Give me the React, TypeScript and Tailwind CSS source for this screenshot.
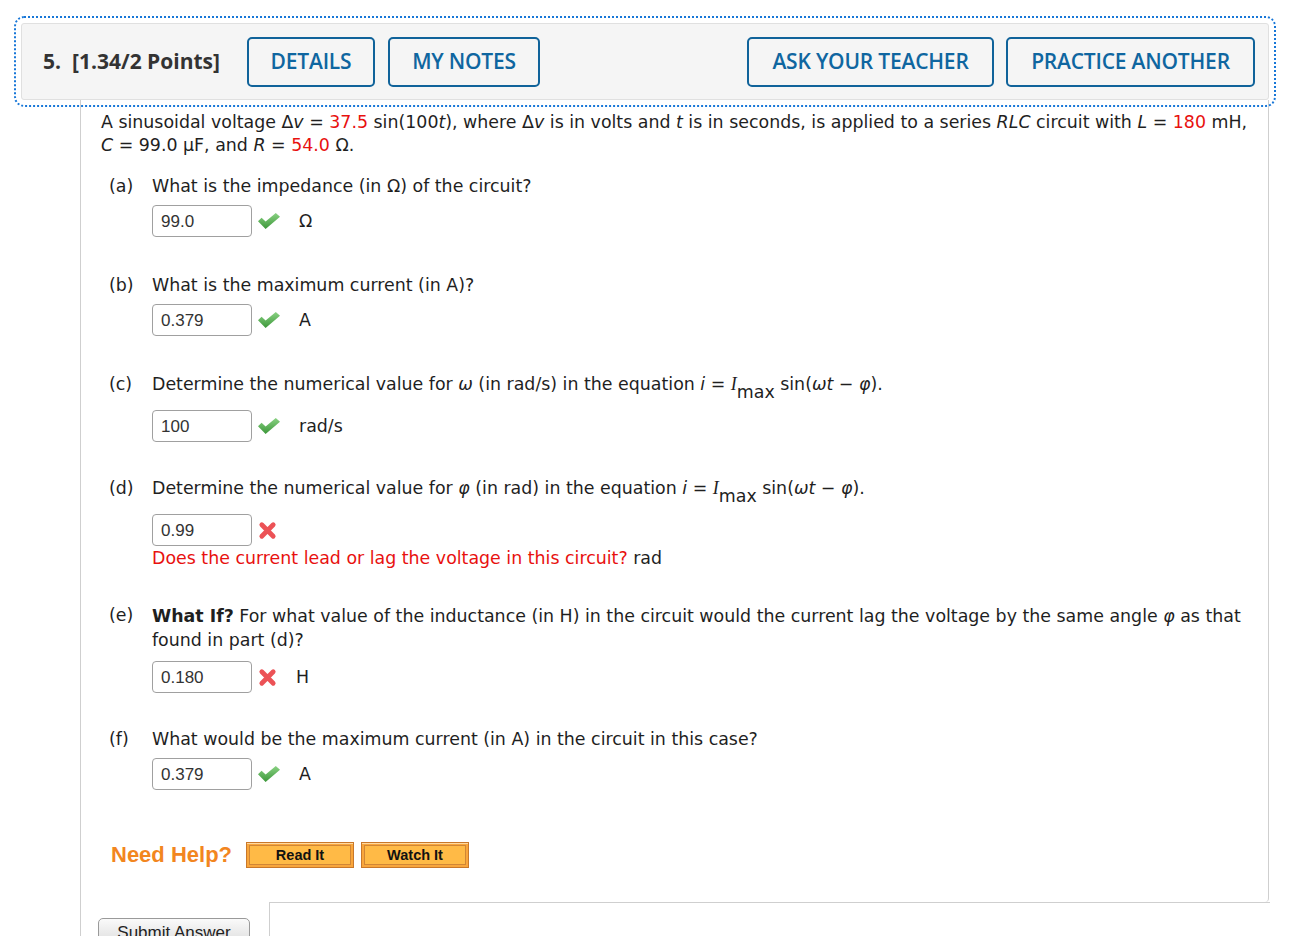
import React from 'react';

const body = "font-['DejaVu_Sans',Verdana,sans-serif]";
const red = 'text-[#e8110f]';

const Check = () => (
  <svg width="22" height="16" viewBox="0 0 22 16" className="shrink-0">
    <defs>
      <linearGradient id="ck" x1="0" y1="0" x2="0" y2="1">
        <stop offset="0" stopColor="#8ad283" />
        <stop offset="1" stopColor="#3c973a" />
      </linearGradient>
    </defs>
    <path d="M0 8.2 L3.6 4.8 L7.6 8.6 L17.8 0 L22 3.8 L7.6 16 Z" fill="url(#ck)" />
  </svg>
);

const Cross = () => (
  <svg width="19" height="19" viewBox="0 0 20 20" className="shrink-0">
    <path d="M4 4 L16 16 M16 4 L4 16" stroke="#ec5256" strokeWidth="5" strokeLinecap="round" />
  </svg>
);

const Sub = () => <span className="relative top-[8px] leading-none">max</span>;

const Eq = () => (
  <>
    <i>i</i> = <i className="font-['Liberation_Serif',serif] text-[18px]">I</i>
    <Sub /> sin(<i>ωt</i> − <i>φ</i>).
  </>
);

const Answer = ({ value, ok, unit }: { value: string; ok: boolean; unit?: string }) => (
  <div className="flex items-center h-[32px]">
    <div className="w-[100px] h-[32px] border border-[#a0a0a0] rounded-[4px] px-[8px] flex items-center font-['Liberation_Sans',Arial,sans-serif] text-[17px] text-[#333]">
      {value}
    </div>
    <div className="ml-[6px]">{ok ? <Check /> : <Cross />}</div>
    {unit && <span className="ml-[19px]">{unit}</span>}
  </div>
);

const Part = ({
  label,
  children,
  className,
}: {
  label: string;
  children: React.ReactNode;
  className?: string;
}) => (
  <div className={`flex pl-[8px] ${className ?? ''}`}>
    <div className="w-[43px] shrink-0">{label}</div>
    <div className="flex-1">{children}</div>
  </div>
);

const HeadBtn = ({ children, w }: { children: React.ReactNode; w: string }) => (
  <button
    className={`${w} h-[50px] border-2 border-[#10639a] rounded-[5px] text-[#0f66a0] text-[21px] font-semibold tracking-[-0.2px]`}
  >
    {children}
  </button>
);

const HelpBtn = ({ children }: { children: React.ReactNode }) => (
  <button className="w-[108px] h-[26px] border border-[#c9782a] bg-[#f9a63c] p-[2px] shadow-[inset_0_1px_0_#ffd9a0]">
    <span className="flex items-center justify-center h-full border border-[#d08636] bg-[#ffba46] font-['Liberation_Sans',Arial,sans-serif] font-bold text-[14.5px] text-[#111]">
      {children}
    </span>
  </button>
);

export default function App() {
  return (
    <div className="min-h-screen bg-white pt-[23px] pl-[21px] w-[1269px]">
      {/* Question header */}
      <div className="h-[77px] bg-[#f5f5f5] border border-[#e0e0e0] rounded-[3px] outline-2 outline-dotted outline-[#1877d8] outline-offset-[5px] flex items-center pl-[21px] pr-[13px] font-['Open_Sans',sans-serif]">
        <span className="text-[21px] font-bold text-[#333]">5.</span>
        <span className="ml-[11px] text-[21px] font-bold text-[#333]">[1.34/2 Points]</span>
        <div className="ml-[27px] flex gap-[13px]">
          <HeadBtn w="w-[128px]">DETAILS</HeadBtn>
          <HeadBtn w="w-[152px]">MY NOTES</HeadBtn>
        </div>
        <div className="ml-auto flex gap-[12px]">
          <HeadBtn w="w-[247px]">ASK YOUR TEACHER</HeadBtn>
          <HeadBtn w="w-[249px]">PRACTICE ANOTHER</HeadBtn>
        </div>
      </div>

      {/* Question body */}
      <div className={`ml-[59px] border-l border-[#cfcfcf] ${body} text-[17.4px] leading-[23px] text-[#1f1f1f]`}>
        <div className="border-r border-[#cfcfcf] rounded-br-[4px] pl-[20px] pr-[14px] pt-[11px] pb-[34px]">
          <p>
            A sinusoidal voltage Δ<i>v</i> = <span className={red}>37.5</span> sin(100<i>t</i>), where Δ<i>v</i> is in
            volts and <i>t</i> is in seconds, is applied to a series <i>RLC</i> circuit with <i>L</i> ={' '}
            <span className={red}>180</span> mH, <i>C</i> = 99.0 μF, and <i>R</i> = <span className={red}>54.0</span> Ω.
          </p>

          <Part label="(a)" className="mt-[18px]">
            <p>What is the impedance (in Ω) of the circuit?</p>
            <div className="mt-[7px]">
              <Answer value="99.0" ok unit="Ω" />
            </div>
          </Part>

          <Part label="(b)" className="mt-[37px]">
            <p>What is the maximum current (in A)?</p>
            <div className="mt-[7px]">
              <Answer value="0.379" ok unit="A" />
            </div>
          </Part>

          <Part label="(c)" className="mt-[37px]">
            <p className="pb-[6px]">
              Determine the numerical value for <i>ω</i> (in rad/s) in the equation <Eq />
            </p>
            <div className="mt-[8px]">
              <Answer value="100" ok unit="rad/s" />
            </div>
          </Part>

          <Part label="(d)" className="mt-[35px]">
            <p className="pb-[6px]">
              Determine the numerical value for <i>φ</i> (in rad) in the equation <Eq />
            </p>
            <div className="mt-[8px]">
              <Answer value="0.99" ok={false} />
            </div>
            <p className="mt-[1px]">
              <span className={red}>Does the current lead or lag the voltage in this circuit?</span> rad
            </p>
          </Part>

          <Part label="(e)" className="mt-[34px]">
            <p className="leading-[24px]">
              <b>What If?</b> For what value of the inductance (in H) in the circuit would the current lag the voltage
              by the same angle <i>φ</i> as that found in part (d)?
            </p>
            <div className="mt-[9px]">
              <Answer value="0.180" ok={false} unit="H" />
            </div>
          </Part>

          <Part label="(f)" className="mt-[35px]">
            <p>What would be the maximum current (in A) in the circuit in this case?</p>
            <div className="mt-[7px]">
              <Answer value="0.379" ok unit="A" />
            </div>
          </Part>

          <div className="mt-[52px] ml-[10px] flex items-center">
            <span className="font-['Liberation_Sans',Arial,sans-serif] font-bold text-[22px] text-[#f2861f] leading-[26px]">
              Need Help?
            </span>
            <div className="ml-[14px] flex gap-[7px]">
              <HelpBtn>Read It</HelpBtn>
              <HelpBtn>Watch It</HelpBtn>
            </div>
          </div>
        </div>

        {/* Footer */}
        <div className="flex">
          <div className="w-[188px] shrink-0 pl-[17px] pt-[16px]">
            <button className="w-[152px] h-[28px] border border-[#9a9a9a] rounded-[5px] bg-gradient-to-b from-[#fafafa] to-[#dcdcdc] font-['Liberation_Sans',Arial,sans-serif] text-[17px] text-[#222]">
              Submit Answer
            </button>
          </div>
          <div className="flex-1 h-[60px] border-t border-l border-[#cfcfcf] -mr-px" />
        </div>
      </div>
    </div>
  );
}
